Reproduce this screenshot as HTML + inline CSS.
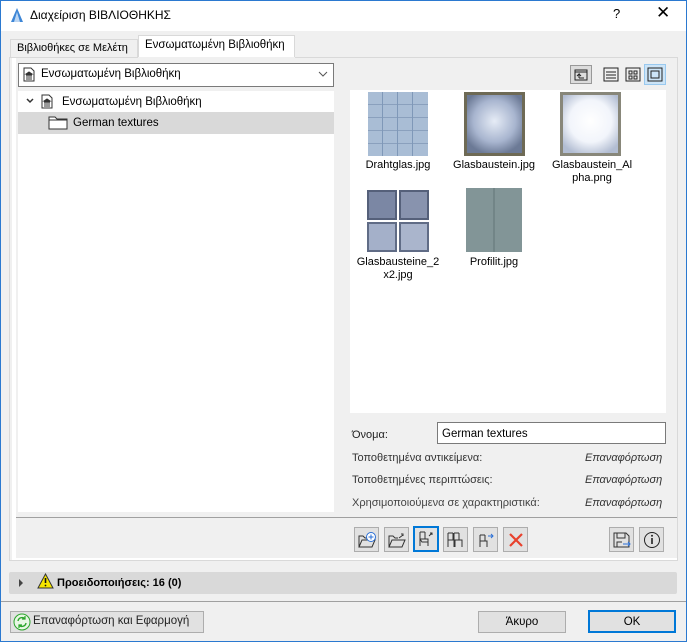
<!DOCTYPE html>
<html><head><meta charset="utf-8"><style>
*{box-sizing:border-box;margin:0;padding:0}
body{width:687px;height:642px;overflow:hidden;background:#f0f0f0;font-family:"Liberation Sans","DejaVu Sans",sans-serif;font-size:11px;color:#000;position:relative}
.a{position:absolute}
.frame{left:0;top:0;width:687px;height:642px;border:1px solid #2b79d0}
.btn{position:absolute;background:#e1e1e1;border:1px solid #adadad;width:25px;height:25px;display:flex;align-items:center;justify-content:center}
.thumb{position:absolute;width:60px;height:64px}
.lbl{position:absolute;text-align:center;font-size:11px;line-height:13px}
</style></head><body>
<div class="a" style="left:0;top:0;width:687px;height:31px;background:#fff"></div>
<svg class="a" style="left:9px;top:7px" width="16" height="16"><path d="M2 15 L8 1 L14 15 Z" fill="#3d86d6"/><path d="M5 15 L8 5 L11 15Z" fill="#bcd6f3"/></svg>
<div class="a" style="left:30px;top:8px;font-size:12px">Διαχείριση ΒΙΒΛΙΟΘΗΚΗΣ</div>
<div class="a" style="left:613px;top:6px;font-size:13px">?</div>
<div class="a" style="left:656px;top:3px;font-size:17px">✕</div>

<!-- tabs -->
<div class="a" style="left:10px;top:39px;width:128px;height:19px;border:1px solid #d9d9d9;border-bottom:none;background:#f0f0f0"></div>
<div class="a" style="left:17px;top:42px">Βιβλιοθήκες σε Μελέτη</div>
<div class="a" style="left:138px;top:35px;width:157px;height:23px;border:1px solid #d9d9d9;border-bottom:none;background:#fff"></div>
<div class="a" style="left:145px;top:39px;font-size:11.5px">Ενσωματωμένη Βιβλιοθήκη</div>
<div class="a" style="left:9px;top:57px;width:669px;height:504px;border:1px solid #d9d9d9;border-top:none;background:#f0f0f0"></div>
<div class="a" style="left:9px;top:57px;width:129px;height:1px;background:#d9d9d9"></div>
<div class="a" style="left:295px;top:57px;width:383px;height:1px;background:#d9d9d9"></div>
<div class="a" style="left:12px;top:58px;width:665px;height:502px;background:#fff"></div>
<div class="a" style="left:16px;top:58px;width:661px;height:500px;background:#f0f0f0"></div>

<!-- dropdown -->
<div class="a" style="left:18px;top:63px;width:316px;height:24px;background:#fff;border:1px solid #7a7a7a"></div>
<svg class="a" style="left:23px;top:67px" width="12" height="15"><path d="M1 1h7l3 3v10H1z" fill="#fff" stroke="#333"/><path d="M3 7l3-2 3 2zM3 8h6M4 8v3M6 8v3M8 8v3M3 12h6" stroke="#333" fill="#333" stroke-width="1"/></svg>
<div class="a" style="left:41px;top:68px;font-size:11.5px">Ενσωματωμένη Βιβλιοθήκη</div>
<svg class="a" style="left:318px;top:71px" width="10" height="7"><path d="M1 1l4 4 4-4" stroke="#555" fill="none"/></svg>

<!-- tree -->
<div class="a" style="left:18px;top:91px;width:316px;height:421px;background:#fff"></div>
<svg class="a" style="left:26px;top:98px" width="8" height="6"><path d="M1 1l3 3 3-3" stroke="#333" fill="none" stroke-width="1.5"/></svg>
<svg class="a" style="left:41px;top:94px" width="12" height="15"><path d="M1 1h7l3 3v10H1z" fill="#fff" stroke="#333"/><path d="M3 7l3-2 3 2zM3 8h6M4 8v3M6 8v3M8 8v3M3 12h6" stroke="#333" fill="#333"/></svg>
<div class="a" style="left:62px;top:96px;font-size:11.5px">Ενσωματωμένη Βιβλιοθήκη</div>
<div class="a" style="left:18px;top:112px;width:316px;height:22px;background:#d9d9d9"></div>
<svg class="a" style="left:48px;top:116px" width="20" height="14"><path d="M1 1h6l2 2h10v10H1z" fill="#fff" stroke="#333"/><path d="M1 4h18" stroke="#333"/></svg>
<div class="a" style="left:73px;top:117px;font-size:11.5px">German textures</div>

<!-- view buttons -->
<div class="a" style="left:570px;top:65px;width:22px;height:19px;background:#dcdcdc;border:1px solid #999"></div>
<svg class="a" style="left:573px;top:67px" width="16" height="15"><path d="M2 3h12v10H2zM2 5h12" stroke="#222" fill="none"/><path d="M6 11V7l-2 2M6 7l2 2M6 11h5" stroke="#222" fill="none"/></svg>
<svg class="a" style="left:603px;top:67px" width="16" height="15"><rect x="1" y="1" width="14" height="13" fill="none" stroke="#222"/><path d="M3 5h10M3 8h10M3 11h10" stroke="#222"/></svg>
<svg class="a" style="left:625px;top:67px" width="16" height="15"><rect x="1" y="1" width="14" height="13" fill="none" stroke="#222"/><rect x="4" y="4" width="3" height="3" fill="none" stroke="#222"/><rect x="9" y="4" width="3" height="3" fill="none" stroke="#222"/><rect x="4" y="9" width="3" height="3" fill="none" stroke="#222"/><rect x="9" y="9" width="3" height="3" fill="none" stroke="#222"/></svg>
<div class="a" style="left:644px;top:64px;width:22px;height:21px;background:#cce4f7;border:1px solid #99c9ef"></div>
<svg class="a" style="left:647px;top:67px" width="16" height="15"><rect x="1" y="1" width="14" height="13" fill="none" stroke="#222"/><rect x="4" y="4" width="8" height="7" fill="none" stroke="#222"/></svg>

<!-- preview -->
<div class="a" style="left:350px;top:90px;width:316px;height:323px;background:#fff"></div>
<div class="thumb" style="left:368px;top:92px;background:linear-gradient(90deg,transparent 14px,#7f98b8 14px,#7f98b8 15px,transparent 15px,transparent 29px,#7f98b8 29px,#7f98b8 30px,transparent 30px,transparent 44px,#7f98b8 44px,#7f98b8 45px,transparent 45px),linear-gradient(0deg,transparent 12px,#8aa0bd 12px,#8aa0bd 13px,transparent 13px,transparent 25px,#8aa0bd 25px,#8aa0bd 26px,transparent 26px,transparent 38px,#8aa0bd 38px,#8aa0bd 39px,transparent 39px,transparent 51px,#8aa0bd 51px,#8aa0bd 52px,transparent 52px),#a9bdd5"></div>
<div class="thumb" style="left:464px;top:92px;width:61px;background:radial-gradient(circle at 50% 45%,#e6ecf6,#a8b5cf 50%,#6c7a96 80%);border:3px solid #6e6a55"></div>
<div class="thumb" style="left:560px;top:92px;width:61px;background:radial-gradient(circle at 50% 45%,#fff,#f2f5fb 50%,#b2bdd2 85%);border:3px solid #88877a"></div>
<div class="lbl" style="left:350px;top:159px;width:96px">Drahtglas.jpg</div>
<div class="lbl" style="left:446px;top:159px;width:96px">Glasbaustein.jpg</div>
<div class="lbl" style="left:544px;top:159px;width:96px">Glasbaustein_Al<br>pha.png</div>
<div class="thumb" style="left:366px;top:189px;width:64px;background:#fff"></div>
<div class="a" style="left:367px;top:190px;width:30px;height:30px;background:#7b87a4;border:2px solid #55607a"></div>
<div class="a" style="left:399px;top:190px;width:30px;height:30px;background:#8893ae;border:2px solid #55607a"></div>
<div class="a" style="left:367px;top:222px;width:30px;height:30px;background:#a4b0c9;border:2px solid #606c86"></div>
<div class="a" style="left:399px;top:222px;width:30px;height:30px;background:#aab5cc;border:2px solid #606c86"></div>
<div class="thumb" style="left:466px;top:188px;width:56px;background:linear-gradient(90deg,#829597 48%,#65787a 50%,#829597 52%)"></div>
<div class="lbl" style="left:350px;top:256px;width:96px">Glasbausteine_2<br>x2.jpg</div>
<div class="lbl" style="left:446px;top:256px;width:96px">Profilit.jpg</div>

<!-- properties -->
<div class="a" style="left:352px;top:429px;color:#222">Όνομα:</div>
<div class="a" style="left:437px;top:422px;width:229px;height:22px;background:#fff;border:1px solid #7a7a7a;padding:5px 0 0 4px;font-size:11.5px">German textures</div>
<div class="a" style="left:352px;top:452px;color:#333">Τοποθετημένα αντικείμενα:</div>
<div class="a" style="left:585px;top:452px;font-style:italic;color:#333">Επαναφόρτωση</div>
<div class="a" style="left:352px;top:474px;color:#333">Τοποθετημένες περιπτώσεις:</div>
<div class="a" style="left:585px;top:474px;font-style:italic;color:#333">Επαναφόρτωση</div>
<div class="a" style="left:352px;top:497px;color:#444">Χρησιμοποιούμενα σε χαρακτηριστικά:</div>
<div class="a" style="left:585px;top:497px;font-style:italic;color:#333">Επαναφόρτωση</div>

<div class="a" style="left:16px;top:517px;width:661px;height:1px;background:#a0a0a0"></div>

<!-- toolbar -->
<div class="btn" style="left:354px;top:527px"><svg width="20" height="18"><path d="M2 16V5h4l2 2h3M2 16l3-7h13l-3 7z" fill="none" stroke="#333"/><circle cx="14" cy="6" r="4.5" fill="#fff" stroke="#2a6fd6"/><path d="M14 3.5v5M11.5 6h5" stroke="#2a6fd6"/></svg></div>
<div class="btn" style="left:384px;top:527px"><svg width="20" height="18"><path d="M2 16V5h4l2 2h3M2 16l3-7h13l-3 7z" fill="none" stroke="#333"/><path d="M12 7l4-3M14 3h2v2" stroke="#333" fill="none"/></svg></div>
<div class="btn" style="left:413px;top:526px;border:2px solid #0078d7;width:26px;height:26px"><svg width="20" height="18"><path d="M4 2v14M4 9h8v7M9 2v7M4 2h5M4 9l2 3h6" fill="none" stroke="#333"/><path d="M13 6l3-3M14 3h2v2" stroke="#333" fill="none"/></svg></div>
<div class="btn" style="left:443px;top:527px"><svg width="20" height="18"><path d="M2 2v14M2 9h7v7M7 2v7M2 2h5M8 2v14M8 9h8v7M13 2v7M8 2h5" fill="none" stroke="#333"/></svg></div>
<div class="btn" style="left:473px;top:527px"><svg width="20" height="18"><path d="M4 4v12M4 10h7v6M9 4v6M4 4h5" fill="none" stroke="#333"/><path d="M12 5h5M15 3l2 2-2 2" stroke="#2a6fd6" fill="none"/></svg></div>
<div class="btn" style="left:503px;top:527px"><svg width="16" height="16"><path d="M2 2l12 12M14 2L2 14" stroke="#e8412c" stroke-width="2.2"/></svg></div>
<div class="btn" style="left:609px;top:527px"><svg width="20" height="18"><path d="M2 2h12l3 3v11H2z" fill="none" stroke="#333"/><path d="M5 2v5h8V2M5 16v-5h5" stroke="#333" fill="none"/><path d="M11 13h7M16 11l2 2-2 2" stroke="#2a6fd6" fill="none"/></svg></div>
<div class="btn" style="left:639px;top:527px"><svg width="18" height="18"><circle cx="9" cy="9" r="7.5" fill="none" stroke="#222"/><path d="M9 7v6" stroke="#222" stroke-width="1.6"/><circle cx="9" cy="4.8" r="1" fill="#222"/></svg></div>

<!-- warnings -->
<div class="a" style="left:9px;top:572px;width:668px;height:22px;background:#d9d9d9;border-radius:2px"></div>
<svg class="a" style="left:18px;top:579px" width="6" height="8"><path d="M1 0l4 4-4 4z" fill="#444"/></svg>
<svg class="a" style="left:37px;top:573px" width="17" height="16"><path d="M8.5 1L16 15H1z" fill="#f6e600" stroke="#333"/><path d="M8.5 5v5" stroke="#111" stroke-width="1.6"/><circle cx="8.5" cy="12.5" r="0.9" fill="#111"/></svg>
<div class="a" style="left:57px;top:577px;font-weight:bold">Προειδοποιήσεις: 16 (0)</div>
<div class="a" style="left:0;top:601px;width:687px;height:1px;background:#a0a0a0"></div>

<!-- bottom buttons -->
<div class="a" style="left:10px;top:611px;width:194px;height:22px;background:#e1e1e1;border:1px solid #adadad"></div>
<svg class="a" style="left:13px;top:613px" width="18" height="18"><circle cx="9" cy="9" r="8" fill="#e8f7e4" stroke="#2aa52a"/><path d="M5 8a4 4 0 0 1 7-2M13 10a4 4 0 0 1-7 2" stroke="#2aa52a" fill="none" stroke-width="1.4"/><path d="M12 3v3h-3M6 15v-3h3" stroke="#2aa52a" fill="none" stroke-width="1.2"/></svg>
<div class="a" style="left:33px;top:615px;font-size:11.5px;color:#222">Επαναφόρτωση και Εφαρμογή</div>
<div class="a" style="left:478px;top:611px;width:88px;height:22px;background:#e1e1e1;border:1px solid #adadad;text-align:center;padding-top:4px;font-size:11.5px">Άκυρο</div>
<div class="a" style="left:588px;top:610px;width:88px;height:23px;background:#e1e1e1;border:2px solid #0078d7;text-align:center;padding-top:4px;font-size:11.5px">OK</div>

<div class="a frame"></div>
</body></html>
